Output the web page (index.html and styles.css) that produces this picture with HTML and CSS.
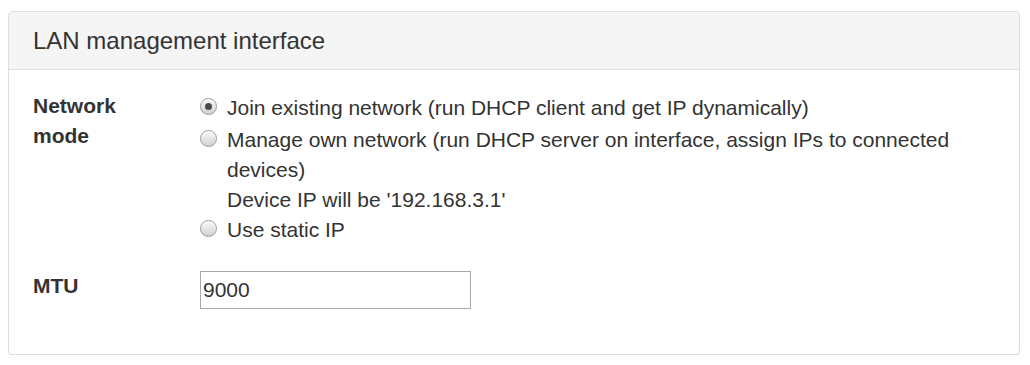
FILE: index.html
```html
<!DOCTYPE html>
<html>
<head>
<meta charset="utf-8">
<link rel="stylesheet" href="styles.css">
</head>
<body>
<div class="panel">
  <div class="panel-heading">LAN management interface</div>
  <div class="panel-body">
    <div class="form-row">
      <div class="form-label">Network mode</div>
      <div class="form-field radios">
        <label class="radio first"><input type="radio" name="mode" class="rb" checked><span>Join existing network (run DHCP client and get IP dynamically)</span></label>
        <label class="radio"><input type="radio" name="mode" class="rb"><span>Manage own network (run DHCP server on interface, assign IPs to connected devices)<br>Device IP will be '192.168.3.1'</span></label>
        <label class="radio"><input type="radio" name="mode" class="rb"><span>Use static IP</span></label>
      </div>
    </div>
    <div class="form-row mtu-row">
      <div class="form-label">MTU</div>
      <div class="form-field">
        <input type="text" class="text-input" value="9000">
      </div>
    </div>
  </div>
</div>
</body>
</html>
```

FILE: styles.css
```css
body {
  margin: 8px;
  background: #fff;
  font-family: "Liberation Sans", Arial, Helvetica, sans-serif;
  color: #333;
}

.panel {
  margin: 3px 2px 0 0;
  border: 1px solid #ddd;
  border-radius: 4px;
  background: #fff;
  box-shadow: 0 1px 1px rgba(0, 0, 0, 0.05);
}

.panel-heading {
  background: #f5f5f5;
  border-bottom: 1px solid #ddd;
  border-radius: 3px 3px 0 0;
  padding: 12px 24px;
  font-size: 24px;
  line-height: 33px;
  color: #333;
}

.panel-body {
  padding: 21px 24px 45px 24px;
}

.form-row {
  display: grid;
  grid-template-columns: 167px 1fr;
}

.mtu-row {
  margin-top: 26px;
}

.form-label {
  font-size: 21px;
  line-height: 30px;
  font-weight: bold;
  width: 110px;
}

.radios {
  padding-top: 2px;
}

.radio {
  display: flex;
  align-items: flex-start;
  font-size: 21px;
  line-height: 30px;
}

.radio.first {
  margin-bottom: 2px;
}

.rb {
  appearance: none;
  -webkit-appearance: none;
  box-sizing: border-box;
  flex: none;
  width: 17px;
  height: 17px;
  margin: 5px 10px 0 0;
  border: 1px solid #999;
  border-radius: 50%;
  background: linear-gradient(#fafafa, #d0d0d0);
  box-shadow: inset 0 1px 1px #fff;
  position: relative;
}

.rb:checked::after {
  content: "";
  position: absolute;
  left: 4px;
  top: 4px;
  width: 7px;
  height: 7px;
  border-radius: 50%;
  background: #4a4a4a;
}

.text-input {
  box-sizing: border-box;
  width: 271px;
  height: 38px;
  margin: 0;
  padding: 0 2px;
  border: 1px solid #a9a9a9;
  font-family: "Liberation Sans", Arial, Helvetica, sans-serif;
  font-size: 21px;
  color: #333;
  background: #fff;
  outline: none;
}
```
